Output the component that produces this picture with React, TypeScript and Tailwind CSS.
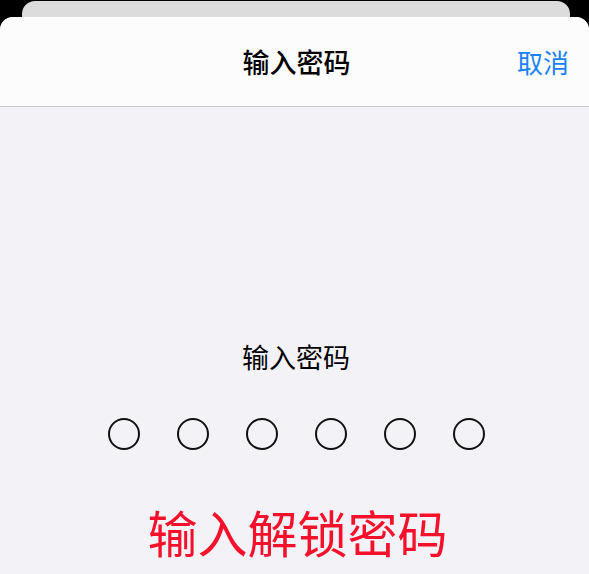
export default function App() {
  const dots = [0, 1, 2, 3, 4, 5]
  return (
    <div
      className="relative h-[574px] w-[589px] overflow-hidden bg-black"
      style={{ fontFamily: '"Noto Sans CJK SC", "Noto Sans", sans-serif' }}
    >
      {/* sheet stacked behind */}
      <div className="absolute left-[22px] right-[19px] top-[1px] h-[40px] rounded-t-[13px] bg-[#dcdcdc]" />

      <div className="relative mt-[17px] flex h-[557px] flex-col overflow-hidden rounded-t-[13px] bg-[#f2f2f7]">
        <div className="relative flex h-[90px] shrink-0 items-center justify-center border-b border-[#c8c8cc] bg-[#fcfcfc]">
          <span className="pl-[4px] text-[27px] font-medium leading-none text-black">输入密码</span>
          <span className="absolute right-[20px] text-[26px] leading-none text-[#1a82f6]">取消</span>
        </div>

        <div className="flex flex-col items-center pt-[231px]">
          <div className="flex h-[36px] items-center pl-[3px] text-[27px] leading-none text-black">输入密码</div>
          <div className="mt-[44px] flex gap-[37px] pl-[3px]">
            {dots.map((d) => (
              <div key={d} className="h-[32px] w-[32px] rounded-full border-2 border-[#111]" />
            ))}
          </div>
          <div className="mt-[51px] flex h-[60px] items-center pl-[6px] text-[50px] leading-none text-[#f5112b]">
            输入解锁密码
          </div>
        </div>
      </div>
    </div>
  )
}
